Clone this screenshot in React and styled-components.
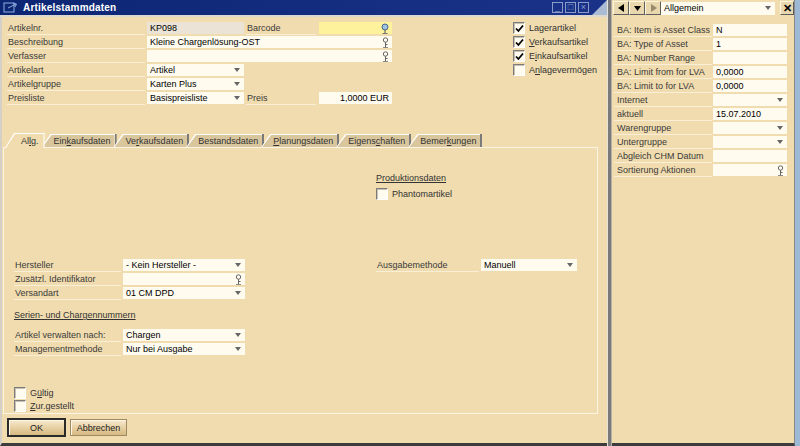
import React from "react";
import styled, { createGlobalStyle } from "styled-components";

const BG = "#F1DCAF";

const Global = createGlobalStyle`
  html, body { margin: 0; padding: 0; }
  body {
    width: 800px; height: 446px; overflow: hidden;
    background: #9DB9D5;
    font-family: "Liberation Sans", Arial, sans-serif;
    font-size: 9px;
    color: #2a2a2a;
  }
  * { box-sizing: border-box; }
`;

const Desktop = styled.div`
  display: flex;
  width: 800px;
  height: 446px;
  background: #9DB9D5;
`;

const MainWindow = styled.div`
  width: 607px;
  height: 446px;
  display: flex;
  flex-direction: column;
  background: ${BG};
  border-left: 2px solid #d4d0c8;
  border-bottom: 3px solid #3c3c3c;
`;

const TitleWrap = styled.div`
  background: #a9bcd3;
  border-bottom: 2px solid #dcd8d0;
  margin-left: -2px;
`;

const TitleBar = styled.div`
  height: 15px;
  display: flex;
  align-items: center;
  padding-left: 3px;
  background: linear-gradient(to right, #0c2673, #1a3389);
  clip-path: polygon(0 0, 100% 0, calc(100% - 15px) 100%, 0 100%);
  color: #fff;
`;

const Title = styled.span`
  font-size: 10px;
  font-weight: bold;
  margin-left: 5px;
  letter-spacing: 0.2px;
`;

const WinButtons = styled.div`
  display: flex;
  gap: 2px;
  margin-left: auto;
  margin-right: 18px;
`;

const WinButton = styled.div`
  width: 11px;
  height: 11px;
  border: 1px solid #8a9cc8;
  display: flex;
  align-items: center;
  justify-content: center;
  color: #8a9cc8;
  font-size: 9px;
  line-height: 9px;
`;

const Body = styled.div`
  flex: 1;
  display: flex;
  flex-direction: column;
`;

const TopForm = styled.div`
  display: flex;
  padding: 5px 0 0 5px;
`;

const FieldBlock = styled.div`
  display: flex;
  flex-direction: column;
  gap: 1px;
`;

const Row = styled.div`
  display: flex;
  align-items: flex-start;
  height: 13px;
  gap: ${p => p.$gap ?? 2}px;
`;

const Label = styled.div`
  width: ${p => p.$w}px;
  height: 13px;
  line-height: 12px;
  padding-left: 1px;
  border-bottom: 1px solid #f9eed6;
  color: #3a3a3a;
  white-space: nowrap;
  margin-right: ${p => p.$mr ?? 0}px;
`;

const tones = { grey: "#EBE4D6", yellow: "#FEF29C", white: "#FFFBEF" };

const Field = styled.div`
  width: ${p => p.$w}px;
  height: 12px;
  padding: 0 3px;
  display: flex;
  align-items: center;
  justify-content: ${p => (p.$right ? "flex-end" : "space-between")};
  background: ${p => tones[p.$tone || "white"]};
  color: #000;
  white-space: nowrap;
`;

const Arrow = styled.span`
  width: 0;
  height: 0;
  border-left: 3.5px solid transparent;
  border-right: 3.5px solid transparent;
  border-top: 4px solid #666;
  margin-right: 1px;
`;

const CheckColumn = styled.div`
  display: flex;
  flex-direction: column;
  gap: 2px;
  margin-left: 121px;
`;

const CheckRow = styled.label`
  display: flex;
  align-items: center;
  height: 12px;
  gap: 4px;
  color: #333;
  white-space: nowrap;
`;

const Box = styled.span`
  width: 12px;
  height: 12px;
  background: #fffbef;
  border: 1px solid;
  border-color: #7c7c7c #ffffff #ffffff #7c7c7c;
  box-shadow: inset 1px 1px 0 #c8c0b0;
  display: flex;
  align-items: center;
  justify-content: center;
`;

const TabArea = styled.div`
  margin: 28px 0 0 1px;
  width: 595px;
`;

const TabStrip = styled.div`
  display: flex;
  align-items: flex-end;
  height: 14px;
  padding-left: 2px;
`;

const TabOuter = styled.div`
  position: relative;
  z-index: ${p => (p.$active ? 1 : 0)};
  height: ${p => (p.$active ? 15 : 13)}px;
  margin-bottom: ${p => (p.$active ? -1 : 0)}px;
  margin-left: ${p => (p.$active ? 0 : -3)}px;
  display: flex;
  background: ${p => (p.$active ? "#ffffff" : "linear-gradient(to left, #7a7a7a 2px, #ffffff 2px)")};
  clip-path: polygon(0 100%, 9px 0, 100% 0, 100% 100%);
`;

const TabFace = styled.div`
  flex: 1;
  margin: 1px ${p => (p.$active ? 1 : 2)}px 0 1px;
  padding: 0 ${p => (p.$active ? 5 : 4)}px 0 ${p => (p.$active ? 15 : 11)}px;
  display: flex;
  align-items: center;
  background: ${p => (p.$active ? BG : "#d9c69d")};
  clip-path: polygon(0 100%, 9px 0, 100% 0, 100% 100%);
  color: #333;
  white-space: nowrap;
`;

const Panel = styled.div`
  height: 267px;
  border: 1px solid #fcf4e2;
  display: flex;
  flex-direction: column;
  padding-left: 10px;
`;

const SectionTitle = styled.div`
  height: 11px;
  line-height: 11px;
  text-decoration: underline;
  color: #333;
  margin-top: ${p => p.$mt ?? 0}px;
`;

const ProdBlock = styled.div`
  display: flex;
  flex-direction: column;
  gap: 4px;
  margin: 25px 0 0 362px;
`;

const MidRow = styled.div`
  display: flex;
  margin-top: 59px;
`;

const Stack = styled.div`
  display: flex;
  flex-direction: column;
  gap: 1px;
  margin-top: ${p => p.$mt ?? 0}px;
  width: ${p => p.$w ?? "auto"};
`;

const BottomChecks = styled.div`
  display: flex;
  flex-direction: column;
  gap: 1px;
  margin-top: 31px;
`;

const ButtonRow = styled.div`
  display: flex;
  gap: 4px;
  padding: 4px 0 0 5px;
`;

const Button = styled.div`
  width: ${p => p.$w}px;
  height: ${p => (p.$default ? 19 : 17)}px;
  margin-top: ${p => (p.$default ? 0 : 1)}px;
  display: flex;
  align-items: center;
  justify-content: center;
  background: linear-gradient(to bottom, #f8ead0, #e4cc9c 60%, #d5b982);
  border: ${p => (p.$default ? "2px solid #2a2a2a" : "1px solid #a08a64")};
  box-shadow: inset 1px 1px 0 #fff6e4;
  color: #222;
  font-size: 9px;
`;

const Splitter = styled.div`
  width: 5px;
  height: 446px;
  background: #7a7a7a;
  border-left: 1px solid #e6e2da;
  border-right: 1px solid #b4b0a8;
`;

const SidePanel = styled.div`
  width: 183px;
  height: 446px;
  background: ${BG};
  border-right: 1px solid #8a8a8a;
  border-bottom: 3px solid #3c3c3c;
  display: flex;
  flex-direction: column;
  padding: 1px 0 0 1px;
`;

const SideHeader = styled.div`
  display: flex;
  align-items: center;
  height: 14px;
`;

const NavButton = styled.div`
  width: 16px;
  height: 14px;
  display: flex;
  align-items: center;
  justify-content: center;
  background: #e9d7ae;
  border: 1px solid;
  border-color: #fff6e0 #5e5e5e #5e5e5e #fff6e0;
`;

const CloseButton = styled(NavButton)`
  width: 14px;
  margin-left: 5px;
  font-weight: bold;
  font-size: 11px;
  color: #000;
`;

const SideRows = styled.div`
  display: flex;
  flex-direction: column;
  gap: 1px;
  margin-top: 9px;
  padding-left: 1px;
`;

const SideLabel = styled(Label)`
  padding-left: 3px;
`;

const Key = () => (
  <svg width="7" height="11" viewBox="0 0 7 11">
    <circle cx="3.5" cy="3" r="2.2" fill="none" stroke="#666" strokeWidth="1" />
    <line x1="3.5" y1="5.2" x2="3.5" y2="10" stroke="#666" strokeWidth="1" />
    <line x1="3.5" y1="7.5" x2="5.5" y2="7.5" stroke="#666" strokeWidth="1" />
    <line x1="1" y1="10.5" x2="6" y2="10.5" stroke="#888" strokeWidth="1" />
  </svg>
);

const Globe = () => (
  <svg width="8" height="11" viewBox="0 0 8 11">
    <circle cx="4" cy="4" r="3" fill="#9fc0de" stroke="#456a8a" strokeWidth="1" />
    <line x1="4" y1="7" x2="4" y2="10" stroke="#555" strokeWidth="1" />
    <line x1="1.5" y1="10.5" x2="6.5" y2="10.5" stroke="#777" strokeWidth="1" />
  </svg>
);

const Tick = () => (
  <svg width="9" height="9" viewBox="0 0 9 9">
    <path d="M1 4.5 L3.4 7 L8 1.5" fill="none" stroke="#000" strokeWidth="1.8" />
  </svg>
);

const Check = ({ checked, children }) => (
  <CheckRow>
    <Box>{checked && <Tick />}</Box>
    <span>{children}</span>
  </CheckRow>
);

const Tri = ({ dir, color = "#000" }) => (
  <svg width="7" height="8" viewBox="0 0 7 8">
    {dir === "left" && <path d="M6 0 L0 4 L6 8 Z" fill={color} />}
    {dir === "right" && <path d="M1 0 L7 4 L1 8 Z" fill={color} />}
    {dir === "down" && <path d="M0 2 L7 2 L3.5 7 Z" fill={color} />}
  </svg>
);

const tabs = [
  <>Al<u>l</u>g.</>,
  <>Ein<u>k</u>aufsdaten</>,
  <>Ve<u>r</u>kaufsdaten</>,
  <>Bestandsdaten</>,
  <><u>P</u>lanungsdaten</>,
  <>Eigens<u>c</u>haften</>,
  <>Bemer<u>k</u>ungen</>,
];

const sideRows = [
  ["BA: Item is Asset Class", "N"],
  ["BA: Type of Asset", "1"],
  ["BA: Number Range", ""],
  ["BA: Limit from for LVA", "0,0000"],
  ["BA: Limit to for  LVA", "0,0000"],
  ["Internet", "", "drop"],
  ["aktuell", "15.07.2010"],
  ["Warengruppe", "", "drop"],
  ["Untergruppe", "", "drop"],
  ["Abgleich CHM Datum", ""],
  ["Sortierung Aktionen", "", "key"],
];

export default function App() {
  return (
    <>
      <Global />
      <Desktop>
        <MainWindow>
          <TitleWrap>
            <TitleBar>
              <svg width="15" height="11" viewBox="0 0 15 11">
                <rect x="1" y="1" width="10" height="9" fill="none" stroke="#8fb0e0" strokeWidth="1" />
                <path d="M5 6 L13 2 M10 1.5 L13.5 2 L12 5" fill="none" stroke="#8fb0e0" strokeWidth="1" />
              </svg>
              <Title>Artikelstammdaten</Title>
              <WinButtons>
                <WinButton>_</WinButton>
                <WinButton>□</WinButton>
                <WinButton>×</WinButton>
              </WinButtons>
            </TitleBar>
          </TitleWrap>
          <Body>
            <TopForm>
              <FieldBlock>
                <Row>
                  <Label $w={138}>Artikelnr.</Label>
                  <Field $w={97} $tone="grey">KP098</Field>
                  <Label $w={70} $mr={1}>Barcode</Label>
                  <Field $w={73} $tone="yellow"><span /><Globe /></Field>
                </Row>
                <Row>
                  <Label $w={138}>Beschreibung</Label>
                  <Field $w={245}>Kleine Chargenlösung-OST<Key /></Field>
                </Row>
                <Row>
                  <Label $w={138}>Verfasser</Label>
                  <Field $w={245}><span /><Key /></Field>
                </Row>
                <Row>
                  <Label $w={138}>Artikelart</Label>
                  <Field $w={97}>Artikel<Arrow /></Field>
                </Row>
                <Row>
                  <Label $w={138}>Artikelgruppe</Label>
                  <Field $w={97}>Karten Plus<Arrow /></Field>
                </Row>
                <Row>
                  <Label $w={138}>Preisliste</Label>
                  <Field $w={97}>Basispreisliste<Arrow /></Field>
                  <Label $w={70} $mr={1}>Preis</Label>
                  <Field $w={73} $right>1,0000 EUR</Field>
                </Row>
              </FieldBlock>
              <CheckColumn>
                <Check checked>La<u>g</u>erartikel</Check>
                <Check checked><u>V</u>erkaufsartikel</Check>
                <Check checked>E<u>i</u>nkaufsartikel</Check>
                <Check>A<u>n</u>lagevermögen</Check>
              </CheckColumn>
            </TopForm>

            <TabArea>
              <TabStrip>
                {tabs.map((t, i) => (
                  <TabOuter key={i} $active={i === 0}>
                    <TabFace $active={i === 0}>{t}</TabFace>
                  </TabOuter>
                ))}
              </TabStrip>
              <Panel>
                <ProdBlock>
                  <SectionTitle>Produktionsdaten</SectionTitle>
                  <Check>Phantomartikel</Check>
                </ProdBlock>
                <MidRow>
                  <Stack $w="362px">
                    <Row>
                      <Label $w={107}>Hersteller</Label>
                      <Field $w={122}>- Kein Hersteller -<Arrow /></Field>
                    </Row>
                    <Row>
                      <Label $w={107}>Zusätzl. Identifikator</Label>
                      <Field $w={122}><span /><Key /></Field>
                    </Row>
                    <Row>
                      <Label $w={107}>Versandart</Label>
                      <Field $w={122}>01 CM DPD<Arrow /></Field>
                    </Row>
                  </Stack>
                  <Stack>
                    <Row $gap={2}>
                      <Label $w={103}>Ausgabemethode</Label>
                      <Field $w={96}>Manuell<Arrow /></Field>
                    </Row>
                  </Stack>
                </MidRow>
                <SectionTitle $mt={10}>Serien- und Chargennummern</SectionTitle>
                <Stack $mt={8}>
                  <Row>
                    <Label $w={107}>Artikel verwalten nach:</Label>
                    <Field $w={122}>Chargen<Arrow /></Field>
                  </Row>
                  <Row>
                    <Label $w={107}>Managementmethode</Label>
                    <Field $w={122}>Nur bei Ausgabe<Arrow /></Field>
                  </Row>
                </Stack>
                <BottomChecks>
                  <Check>G<u>ü</u>ltig</Check>
                  <Check><u>Z</u>ur.gestellt</Check>
                </BottomChecks>
              </Panel>
            </TabArea>

            <ButtonRow>
              <Button $w={59} $default>OK</Button>
              <Button $w={57}>Abbrechen</Button>
            </ButtonRow>
          </Body>
        </MainWindow>

        <Splitter />

        <SidePanel>
          <SideHeader>
            <NavButton><Tri dir="left" /></NavButton>
            <NavButton><Tri dir="down" /></NavButton>
            <NavButton><Tri dir="right" color="#9a8a6a" /></NavButton>
            <Field $w={114} style={{ height: 13 }}>Allgemein<Arrow /></Field>
            <CloseButton>✕</CloseButton>
          </SideHeader>
          <SideRows>
            {sideRows.map(([l, v, kind]) => (
              <Row key={l} $gap={1}>
                <SideLabel $w={98}>{l}</SideLabel>
                <Field $w={74}>
                  {v || <span />}
                  {kind === "drop" && <Arrow />}
                  {kind === "key" && <Key />}
                </Field>
              </Row>
            ))}
          </SideRows>
        </SidePanel>
      </Desktop>
    </>
  );
}
